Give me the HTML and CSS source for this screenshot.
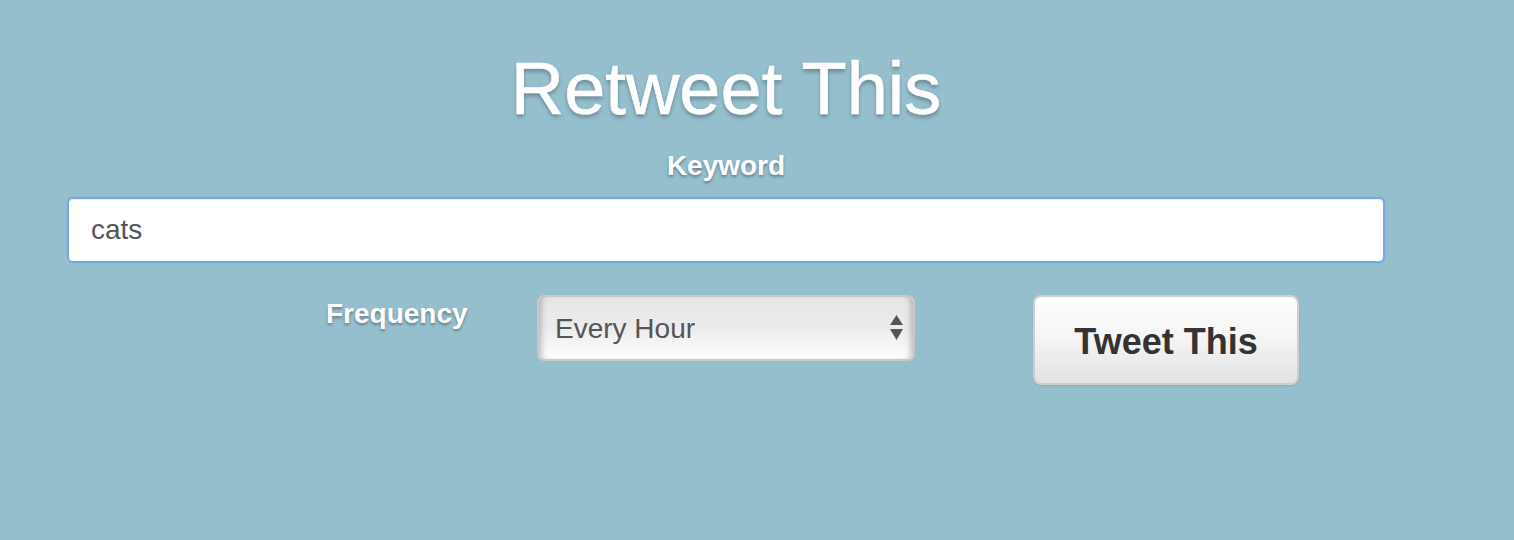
FILE: index.html
```html
<!DOCTYPE html>
<html>
<head>
<meta charset="utf-8">
<title>Retweet This</title>
<link rel="stylesheet" href="styles.css">
</head>
<body>
<div class="container">
  <h1 class="title">Retweet This</h1>
  <label class="label label-keyword" for="kw">Keyword</label>
  <input id="kw" class="keyword-input" type="text" value="cats">
  <div class="row">
    <label class="label label-freq" for="freq">Frequency</label>
    <div class="select-wrap">
      <select id="freq" class="freq-select">
        <option>Every Hour</option>
        <option>Every Day</option>
      </select>
      <svg class="select-arrows" width="13" height="25" viewBox="0 0 13 25">
        <path d="M6.5 0 L13 10 L0 10 Z" fill="#555"/>
        <path d="M0 14 L13 14 L6.5 25 Z" fill="#555"/>
      </svg>
    </div>
    <button class="tweet-btn" type="button">Tweet This</button>
  </div>
</div>
</body>
</html>
```
FILE: styles.css
```css
html, body {
  margin: 0;
  padding: 0;
}
body {
  background: #96bfce;
  font-family: "Liberation Sans", Arial, Helvetica, sans-serif;
  width: 1514px;
  height: 540px;
  overflow: hidden;
}
.container {
  margin-left: 67px;
  width: 1318px;
  display: flex;
  flex-direction: column;
}
.title {
  margin: 48px 0 0;
  font-size: 74px;
  line-height: 81px;
  font-weight: normal;
  color: #fff;
  text-align: center;
  text-shadow: 0 3px 4px rgba(0, 0, 0, 0.3);
  -webkit-text-stroke: 0.6px #fff;
}
.label {
  color: #fff;
  font-weight: bold;
  font-size: 28px;
  line-height: 32px;
  text-shadow: 0 2px 3px rgba(0, 0, 0, 0.35);
}
.label-keyword {
  margin-top: 21px;
  text-align: center;
}
.keyword-input {
  margin-top: 15px;
  box-sizing: border-box;
  width: 1318px;
  height: 66px;
  border: 2px solid #76aae6;
  border-radius: 6px;
  background: #fff;
  padding: 0 22px;
  font-family: "Liberation Sans", Arial, sans-serif;
  font-size: 28px;
  color: #555;
  outline: none;
  box-shadow: inset 0 1px 1px rgba(0, 0, 0, 0.075), 0 0 2px rgba(102, 160, 233, 0.6);
}
.row {
  margin-top: 32px;
  display: flex;
  align-items: flex-start;
}
.label-freq {
  margin-left: 259px;
  margin-top: 3px;
  width: 140px;
  white-space: nowrap;
}
.select-wrap {
  position: relative;
  margin-left: 71px;
  width: 378px;
  height: 66px;
}
.freq-select {
  -webkit-appearance: none;
  appearance: none;
  box-sizing: border-box;
  width: 378px;
  height: 66px;
  border: 2px solid #c8c8c8;
  border-radius: 7px;
  padding: 0 0 0 16px;
  font-family: "Liberation Sans", Arial, sans-serif;
  font-size: 28px;
  color: #555;
  background: linear-gradient(to bottom, #e6e6e6 0%, #ececec 50%, #fdfdfd 100%);
  box-shadow: inset 7px 0 6px -5px rgba(0, 0, 0, 0.25), inset -7px 0 6px -5px rgba(0, 0, 0, 0.25);
  outline: none;
}
.select-arrows {
  position: absolute;
  left: 353px;
  top: 20px;
  pointer-events: none;
}
.tweet-btn {
  margin-left: 118px;
  box-sizing: border-box;
  width: 266px;
  height: 90px;
  border: 2px solid #cfcfcf;
  border-radius: 8px;
  background: linear-gradient(to bottom, #ffffff 0%, #f4f4f4 50%, #e2e2e2 100%);
  font-family: "Liberation Sans", Arial, sans-serif;
  font-weight: bold;
  font-size: 36px;
  color: #333;
  padding: 4px 0 0;
  box-shadow: 0 1px 2px rgba(0, 0, 0, 0.1);
}
```
